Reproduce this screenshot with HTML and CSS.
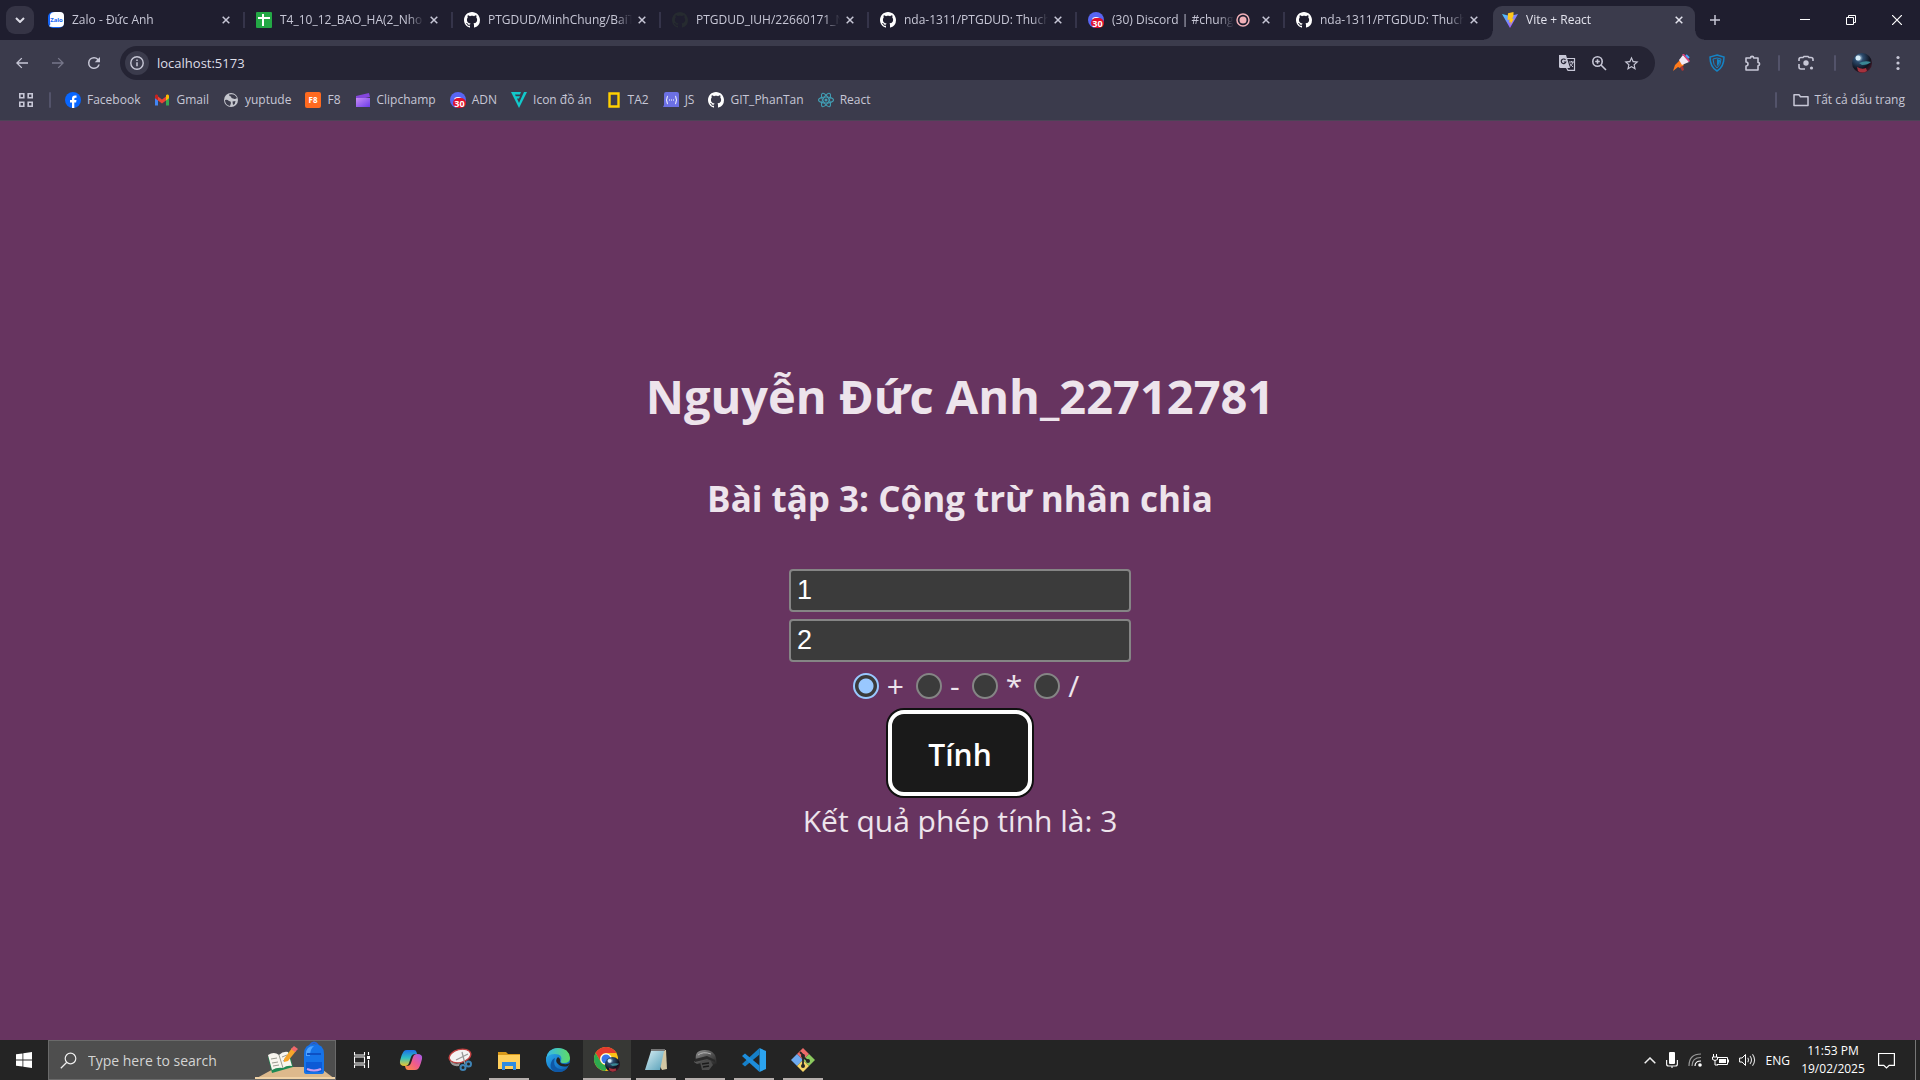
FILE: index.html
```html
<!DOCTYPE html>
<html lang="vi">
<head>
<meta charset="utf-8">
<title>Vite + React</title>
<link rel="stylesheet" href="styles.css">
</head>
<body>
<svg class="defs" aria-hidden="true">
  <defs>
    <linearGradient id="gViteA" x1="0" y1="0" x2="1" y2="1"><stop offset="0" stop-color="#41d1ff"/><stop offset="1" stop-color="#bd34fe"/></linearGradient>
    <linearGradient id="gClip" x1="0" y1="0" x2="1" y2="1"><stop offset="0" stop-color="#c88cf5"/><stop offset="1" stop-color="#6a3be8"/></linearGradient>
    <linearGradient id="gEdge" x1="0" y1="0" x2="1" y2="1"><stop offset="0" stop-color="#2fb6e8"/><stop offset=".5" stop-color="#1b84d6"/><stop offset="1" stop-color="#0c59a4"/></linearGradient>
    <linearGradient id="gEdge2" x1="0" y1="0" x2="1" y2="0"><stop offset="0" stop-color="#35b7f0"/><stop offset="1" stop-color="#5fdc64"/></linearGradient>
    <linearGradient id="gCopA" x1="0" y1="0" x2="0" y2="1"><stop offset="0" stop-color="#1c6fe8"/><stop offset=".5" stop-color="#2fc0c4"/><stop offset="1" stop-color="#f2c62b"/></linearGradient>
    <linearGradient id="gCopB" x1="1" y1="0" x2="0" y2="1"><stop offset="0" stop-color="#a05af0"/><stop offset=".5" stop-color="#f05a8c"/><stop offset="1" stop-color="#fb923c"/></linearGradient>
    <linearGradient id="gNote" x1="0" y1="0" x2="1" y2="1"><stop offset="0" stop-color="#d8eef3"/><stop offset="1" stop-color="#559fb8"/></linearGradient>
    <radialGradient id="gOrb" cx=".35" cy=".25" r=".8"><stop offset="0" stop-color="#cfe8f5"/><stop offset=".25" stop-color="#2d4d70"/><stop offset=".7" stop-color="#10131f"/><stop offset="1" stop-color="#4a1626"/></radialGradient>
    <linearGradient id="gHelm" x1="0" y1="0" x2="1" y2="1"><stop offset="0" stop-color="#999"/><stop offset=".5" stop-color="#555"/><stop offset="1" stop-color="#222"/></linearGradient>
    <symbol id="github" viewBox="0 0 16 16"><path fill="currentColor" d="M8 0C3.58 0 0 3.58 0 8c0 3.54 2.29 6.53 5.47 7.59.4.07.55-.17.55-.38 0-.19-.01-.82-.01-1.49-2.01.37-2.53-.49-2.69-.94-.09-.23-.48-.94-.82-1.13-.28-.15-.68-.52-.01-.53.63-.01 1.08.58 1.23.82.72 1.21 1.87.87 2.33.66.07-.52.28-.87.51-1.07-1.78-.2-3.64-.89-3.64-3.95 0-.87.31-1.59.82-2.15-.08-.2-.36-1.02.08-2.12 0 0 .67-.21 2.2.82.64-.18 1.32-.27 2-.27s1.36.09 2 .27c1.53-1.04 2.2-.82 2.2-.82.44 1.1.16 1.92.08 2.12.51.56.82 1.27.82 2.15 0 3.07-1.87 3.75-3.65 3.95.29.25.54.73.54 1.48 0 1.07-.01 1.93-.01 2.2 0 .21.15.46.55.38A8.01 8.01 0 0 0 16 8c0-4.42-3.58-8-8-8z"/></symbol>
    <symbol id="x" viewBox="0 0 8 8"><path d="M.7.7l6.6 6.6M7.3.7L.7 7.3" fill="none" stroke="currentColor" stroke-width="1.5"/></symbol>
    <symbol id="back" viewBox="0 0 24 24"><path fill="currentColor" d="M21 11H6.83l5.59-5.59L11 4l-8 8 8 8 1.41-1.41L6.83 13H21v-2z"/></symbol>
    <symbol id="discord" viewBox="0 0 16 16"><circle cx="8" cy="8" r="8" fill="#5865f2"/><path d="M4.500 6q3.500-2 7 0v3h-7z" fill="#fff"/><rect x="3" y="6" width="13" height="10" rx="5" fill="#e0102a"/><text x="9.500" y="14.500" text-anchor="middle" font-size="9" font-weight="700" fill="#fff">30</text></symbol>
    <symbol id="orb" viewBox="0 0 20 20"><circle cx="10" cy="10" r="10" fill="url(#gOrb)"/><path d="M7 10q6-3 12-1-3 3-9 3z" fill="#3a8794"/><path d="M5 14q5 3 9 1l1 3q-5 3-9 0z" fill="#a5323d"/><circle cx="6" cy="5" r="2.500" fill="#d7edf8"/></symbol>
  </defs>
</svg>

<div class="window">
  <header class="browser">
    <div class="tabstrip">
      <button class="tab-search" aria-label="Tìm thẻ"><svg width="10" height="6" viewBox="0 0 10 6"><path d="M1 1l4 4 4-4" fill="none" stroke="currentColor" stroke-width="2"/></svg></button>
      <div class="tab">
        <svg class="icon16" viewBox="0 0 16 16"><rect width="16" height="16" rx="5" fill="#1565f5"/><path d="M2 3q1-3 5-3h5q4 0 4 4v7q0 4-4 4H5q-3 0-4-1 2-1 1-4z" fill="#fff"/><text x="8.500" y="10" font-size="6" font-weight="700" text-anchor="middle" fill="#1565f5">Zalo</text></svg>
        <span class="tab-title">Zalo - Đức Anh</span><button class="tab-close" aria-label="Đóng"><svg><use href="#x"/></svg></button>
      </div>
      <div class="tab">
        <svg class="icon16" viewBox="0 0 16 16"><rect width="16" height="16" rx="1" fill="#23a845"/><path d="M7 2v12M2 6h12" stroke="#fff" stroke-width="2"/></svg>
        <span class="tab-title">T4_10_12_BAO_HA(2_Nho</span><button class="tab-close" aria-label="Đóng"><svg><use href="#x"/></svg></button>
      </div>
      <div class="tab">
        <svg class="icon16 white"><use href="#github"/></svg>
        <span class="tab-title">PTGDUD/MinhChung/BaiT</span><button class="tab-close" aria-label="Đóng"><svg><use href="#x"/></svg></button>
      </div>
      <div class="tab">
        <svg class="icon16 dim"><use href="#github"/></svg>
        <span class="tab-title">PTGDUD_IUH/22660171_N</span><button class="tab-close" aria-label="Đóng"><svg><use href="#x"/></svg></button>
      </div>
      <div class="tab">
        <svg class="icon16 white"><use href="#github"/></svg>
        <span class="tab-title">nda-1311/PTGDUD: Thuch</span><button class="tab-close" aria-label="Đóng"><svg><use href="#x"/></svg></button>
      </div>
      <div class="tab">
        <svg class="icon16"><use href="#discord"/></svg>
        <span class="tab-title">(30) Discord | #chung</span>
        <svg class="rec" viewBox="0 0 14 14"><circle cx="7" cy="7" r="6" fill="none" stroke="#f0b0b8" stroke-width="1.500"/><circle cx="7" cy="7" r="3.500" fill="#f0b0b8"/></svg>
        <button class="tab-close" aria-label="Đóng"><svg><use href="#x"/></svg></button>
      </div>
      <div class="tab">
        <svg class="icon16 white"><use href="#github"/></svg>
        <span class="tab-title">nda-1311/PTGDUD: Thuch</span><button class="tab-close" aria-label="Đóng"><svg><use href="#x"/></svg></button>
      </div>
      <div class="tab active">
        <svg class="icon16" viewBox="0 0 16 16"><path d="M0 2l8 14 8-14-8 2z" fill="url(#gViteA)"/><path d="M11.500 0L6 1.200 5.600 8l2-.4-.5 3 1.800-.6-.8 3.500L12 6.500l-2 .4 1.500-3z" fill="#ffc61a"/></svg>
        <span class="tab-title">Vite + React</span><button class="tab-close" aria-label="Đóng"><svg><use href="#x"/></svg></button>
      </div>
      <button class="new-tab" aria-label="Thẻ mới"><svg width="10" height="10" viewBox="0 0 10 10"><path d="M5 0v10M0 5h10" stroke="currentColor" stroke-width="1.500"/></svg></button>
      <div class="win-controls">
        <button aria-label="Thu nhỏ"><svg width="10" height="10" viewBox="0 0 10 10"><path d="M0 4.500h10" stroke="#fff"/></svg></button>
        <button aria-label="Khôi phục"><svg width="10" height="10" viewBox="0 0 10 10"><path d="M.5 2.500h7v7h-7zM2.500 2.500v-2h7v7h-2" fill="none" stroke="#fff"/></svg></button>
        <button aria-label="Đóng cửa sổ"><svg width="10" height="10" viewBox="0 0 10 10"><path d="M0 0l10 10M10 0L0 10" stroke="#fff" stroke-width="1.200"/></svg></button>
      </div>
    </div>

    <div class="toolbar">
      <button class="nav" aria-label="Quay lại"><svg width="16" height="16"><use href="#back"/></svg></button>
      <button class="nav off" aria-label="Tiến"><svg class="flip" width="16" height="16"><use href="#back"/></svg></button>
      <button class="nav" aria-label="Tải lại"><svg width="18" height="18" viewBox="0 0 24 24"><path fill="currentColor" d="M17.65 6.35A7.96 7.96 0 0 0 12 4a8 8 0 1 0 7.730 10h-2.080A6 6 0 1 1 12 6c1.660 0 3.140.690 4.220 1.780L13 11h7V4l-2.350 2.350z"/></svg></button>
      <div class="omnibox">
        <span class="info"><svg width="16" height="16" viewBox="0 0 16 16"><circle cx="8" cy="8" r="6.200" fill="none" stroke="currentColor" stroke-width="1.400"/><path d="M8 7.200v4M8 4.500v1.600" stroke="currentColor" stroke-width="1.500"/></svg></span>
        <input class="url" aria-label="Địa chỉ" value="localhost:5173">
        <button class="omni" aria-label="Dịch"><svg width="18" height="18" viewBox="0 0 18 18"><path d="M1 1h7l4 13H2.500Q1 14 1 12.500z" fill="currentColor"/><path d="M9 4.500h7.500v11.800H10l-1.500-2.500" fill="none" stroke="currentColor" stroke-width="1.200"/><path d="M7.500 6A2.300 2.300 0 1 0 7.800 8H5.800" fill="none" stroke="#252434" stroke-width="1.200"/><path d="M11 8h5M13.500 7v1M15 8q-1 3-3 4.500M12 9.500q1 2 3 3.500" fill="none" stroke="currentColor"/></svg></button>
        <button class="omni" aria-label="Thu phóng"><svg width="16" height="16" viewBox="0 0 16 16"><circle cx="6.500" cy="6.500" r="4.700" fill="none" stroke="currentColor" stroke-width="1.600"/><path d="M10 10l5 5M6.500 4.200v4.600M4.200 6.500h4.600" stroke="currentColor" stroke-width="1.600"/></svg></button>
        <button class="omni" aria-label="Đánh dấu"><svg width="17" height="17" viewBox="0 0 24 24"><path fill="currentColor" d="M22 9.240l-7.190-.620L12 2 9.190 8.630 2 9.240l5.460 4.730L5.820 21 12 17.270 18.180 21l-1.630-7.030L22 9.240zM12 15.400l-3.760 2.270 1-4.280-3.320-2.880 4.380-.380L12 6.100l1.710 4.040 4.380.380-3.320 2.880 1 4.280L12 15.400z"/></svg></button>
      </div>
      <button class="ext" aria-label="Tiện ích loa"><svg width="18" height="18" viewBox="0 0 18 18"><path d="M1 17l2-6 5-5 4 5-4 3-2-1z" fill="#ff7a1a"/><path d="M7 6l4-5 6 7-7 3z" fill="#f3e8f4"/><path d="M10 0l7 8 1-1-6-7z" fill="#e83e7e"/><path d="M8 13l2 4 2-1-1-4z" fill="#a33"/><path d="M14 1l3 3" stroke="#49a4ff" stroke-width="2"/></svg></button>
      <button class="ext" aria-label="Tiện ích khiên"><svg width="16" height="18" viewBox="0 0 16 18"><path d="M8 1l7 2q0 10-7 14Q1 13 1 3z" fill="none" stroke="#1583c4" stroke-width="1.500"/><path d="M8 4l4 1q0 6-4 9-4-3-4-9z" fill="none" stroke="#1583c4"/><path d="M8 5l3 1q0 4-3 6z" fill="#1583c4"/></svg></button>
      <button class="ext puzzle" aria-label="Tiện ích"><svg width="18" height="18" viewBox="0 0 18 18"><path d="M2 4h4.500a1.600 1.600 0 1 1 3.200 0H14v4.500a1.600 1.600 0 1 1 0 3.200V16H2v-4a2 2 0 0 0 0-4z" fill="none" stroke="currentColor" stroke-width="1.600" stroke-linejoin="round"/></svg></button>
      <span class="sep"></span>
      <button class="ext lens" aria-label="Ống kính"><svg width="16" height="16" viewBox="0 0 16 16"><path d="M1 6V4.500Q1 2.500 3 2.500h2l1-1h4l1 1h2q2 0 2 2V6M1 9v3q0 2 2 2h4" fill="none" stroke="currentColor" stroke-width="1.600"/><circle cx="8" cy="8" r="2.700" fill="currentColor"/><circle cx="13.500" cy="13" r="1.600" fill="currentColor"/></svg></button>
      <span class="sep"></span>
      <button class="ext avatar" aria-label="Hồ sơ"><svg width="20" height="20"><use href="#orb"/></svg></button>
      <button class="ext" aria-label="Menu"><svg width="4" height="16" viewBox="0 0 4 16"><g fill="currentColor"><circle cx="2" cy="2.500" r="1.600"/><circle cx="2" cy="8" r="1.600"/><circle cx="2" cy="13.500" r="1.600"/></g></svg></button>
    </div>

    <nav class="bookmarks">
      <button class="apps" aria-label="Nhóm thẻ"><svg width="14" height="14" viewBox="0 0 14 14"><path d="M.8.8h4v4h-4zM9.200.8h4v4h-4zM.8 9.200h4v4h-4zM9.200 9.200h4v4h-4z" fill="none" stroke="currentColor" stroke-width="1.600"/></svg></button>
      <span class="sep"></span>
      <a class="bm" href="#"><svg class="icon16" viewBox="0 0 16 16"><circle cx="8" cy="8" r="8" fill="#0866ff"/><path d="M7 16v-5.500H5V8h2V6.500Q7 3.500 10 3.500h1.500v2.200h-1Q9.300 5.700 9.300 7v1h2.200l-.4 2.500H9.300V16z" fill="#fff"/></svg>Facebook</a>
      <a class="bm" href="#"><svg class="icon16" viewBox="0 0 16 16"><path d="M1 3.500v10h3V7z" fill="#4285f4"/><path d="M15 3.500v10h-3V7z" fill="#34a853"/><path d="M4 4.500l4 3 4-3V8.500l-4 3-4-3z" fill="#ea4335"/><path d="M1 4q0-2 2-1.500l1 .8v5.200L1 6.200z" fill="#c5221f"/><path d="M15 4q0-2-2-1.500l-1 .8v5.200l3-2.300z" fill="#fbbc04"/></svg>Gmail</a>
      <a class="bm" href="#"><svg class="icon16" viewBox="0 0 16 16"><circle cx="8" cy="8" r="7" fill="#c5c6ce"/><path d="M2 8q2-1 4 1 2 0 2 2l-1 3Q2 13 2 8zM6 2.500q0 2 2 2 0 2 2 2 2 1 4-.5Q12 1 6 2.500zM9.500 9.500l3-.5q0 3-2.500 4z" fill="#3c3c4c"/></svg>yuptude</a>
      <a class="bm" href="#"><svg class="icon16" viewBox="0 0 16 16"><rect width="16" height="16" rx="2" fill="#ff6a1f"/><text x="8" y="11" text-anchor="middle" font-size="8" font-weight="700" fill="#fff">F8</text></svg>F8</a>
      <a class="bm" href="#"><svg class="icon16" viewBox="0 0 16 16"><path d="M1 4l13-3 1 4-14 3z" fill="#8547dd"/><path d="M1 6h14v9H1z" fill="url(#gClip)"/></svg>Clipchamp</a>
      <a class="bm" href="#"><svg class="icon16"><use href="#discord"/></svg>ADN</a>
      <a class="bm" href="#"><svg class="icon16" viewBox="0 0 16 16"><path d="M0 0h10L9 2.500H4l.8 1.700H9L8 6.500H6l2 4.500L13 0h3L8 16z" fill="#12c9cb"/></svg>Icon đồ án</a>
      <a class="bm" href="#"><svg class="icon16" viewBox="0 0 16 16"><path d="M3.500 1.500h9v13h-9z" fill="none" stroke="#ffcf00" stroke-width="2.400"/></svg>TA2</a>
      <a class="bm" href="#"><svg class="icon16" viewBox="0 0 16 16"><path d="M1 2q0-2 2-2h11q2 0 2 2v13H0l1-2z" fill="#6c70e4"/><path d="M5 4Q4 4 4 6T3 8q1 0 1 2t1 2M12 4q1 0 1 2t1 2q-1 0-1 2t-1 2M6 8h1M8 8h1M10 8h1" fill="none" stroke="#fff"/></svg>JS</a>
      <a class="bm" href="#"><svg class="icon16 white"><use href="#github"/></svg>GIT_PhanTan</a>
      <a class="bm" href="#"><svg class="icon16" viewBox="0 0 16 16"><g fill="none" stroke="#419cb2" stroke-width="1.100"><ellipse cx="8" cy="8" rx="7.500" ry="3"/><ellipse cx="8" cy="8" rx="7.500" ry="3" transform="rotate(60 8 8)"/><ellipse cx="8" cy="8" rx="7.500" ry="3" transform="rotate(120 8 8)"/></g><circle cx="8" cy="8" r="1.500" fill="#419cb2"/></svg>React</a>
      <div class="all-bookmarks"><span class="sep"></span>
      <a class="bm all" href="#"><svg class="icon16" viewBox="0 0 16 16"><path d="M1 2.700h5l1.500 2H15v8.800H1z" fill="none" stroke="currentColor" stroke-width="1.500" stroke-linejoin="round"/></svg>Tất cả dấu trang</a></div>
    </nav>
  </header>

  <main class="page">
    <h1>Nguyễn Đức Anh_22712781</h1>
    <h2>Bài tập 3: Cộng trừ nhân chia</h2>
    <div class="fields">
      <input type="text" aria-label="Số thứ nhất" value="1">
      <input type="text" aria-label="Số thứ hai" value="2">
    </div>
    <div class="ops">
      <label><input type="radio" name="op" checked>+</label>
      <label><input type="radio" name="op">-</label>
      <label><input type="radio" name="op">*</label>
      <label><input type="radio" name="op">/</label>
    </div>
    <button class="calc">Tính</button>
    <p class="result">Kết quả phép tính là: 3</p>
  </main>

  <footer class="taskbar">
    <button class="start" aria-label="Start"><svg width="16" height="16" viewBox="0 0 16 16"><path d="M0 2.300L6.500 1.400v6.200H0zM7.300 1.300L16 0v7.600H7.300zM0 8.400h6.500v6.200L0 13.700zM7.300 8.400H16V16l-8.700-1.300z" fill="#fff"/></svg></button>
    <label class="search">
      <svg width="17" height="17" viewBox="0 0 17 17"><circle cx="10.500" cy="6.500" r="5.300" fill="none" stroke="#eee" stroke-width="1.200"/><path d="M6.800 10.300L.8 16.200" stroke="#eee" stroke-width="1.300"/></svg>
      <input type="text" placeholder="Type here to search" aria-label="Type here to search">
      <svg class="art" width="80" height="38" viewBox="0 0 80 38"><path d="M0 38l22-12h42l16 12z" fill="#ddb98c"/><path d="M0 36h80v2H0z" fill="#f0d2a6"/><path d="M13 16l4 16 21-6-4-15-10 3z" fill="#1f8a54"/><path d="M13 14q6-4 11 0 4-4 9-3l4 14q-5-1-9 2-6-1-11 2z" fill="#f8f6ef"/><path d="M24 14l4 13M16 18l6-1M17 22l6-1M18 25l6-1M27 16l5-2M28 20l5-2" stroke="#9a9a90"/><path d="M29 18l8-11 4 3-8 10-4 1z" fill="#f6a52a"/><path d="M36 8l3-3 4 3-3 3z" fill="#f0686c"/><path d="M55 4q4-5 8 0" fill="none" stroke="#2563d9" stroke-width="2"/><path d="M49 31V13q0-10 10-10t10 10v18q0 2-3 2H52q-3 0-3-2z" fill="#1673e8"/><path d="M51 13q0-8 8-8-4 3-4 10h-4z" fill="#4fa3ff"/><path d="M52 12h14v2H52z" fill="#0d50c4"/><path d="M51 21h16v9q0 1-2 1H53q-2 0-2-1z" fill="#0d5ad6"/><path d="M52 28q7 3 14 0" stroke="#c79df0" stroke-width="2" fill="none"/></svg>
    </label>
    <div class="apps-row">
      <button class="app" aria-label="Task View"><svg width="16" height="16" viewBox="0 0 16 16"><path d="M.5 0v3h10V0M.5 16v-3h10v3M.5 5h10v6H.5zM14.500 0v3M14.500 8v8" fill="none" stroke="#fff" stroke-width="1.100"/><path d="M13 4h3v3h-3z" fill="#fff"/></svg></button>
      <button class="app" aria-label="Copilot"><svg width="24" height="24" viewBox="0 0 24 24"><path d="M8 2h7q2 0 2.500 2L18 6h-2q-3 0-4 3l-2 6q-1 3-4 3-6 0-5-5 2-8 4-10 1-1 3-1z" fill="url(#gCopA)"/><path d="M16 22H9q-2 0-2.500-2L6 18h2q3 0 4-3l2-6q1-3 4-3 6 0 5 5-2 8-4 10-1 1-3 1z" fill="url(#gCopB)"/></svg></button>
      <button class="app" aria-label="Snipping Tool"><svg width="24" height="24" viewBox="0 0 24 24"><ellipse cx="12" cy="8" rx="11" ry="6.500" transform="rotate(-14 12 8)" fill="#f3f3f3" stroke="#c24242" stroke-width="1.400"/><path d="M2 13q5 4 10 2l-1 3q-8 1-9-5z" fill="#999"/><path d="M14 4l3 12M8 12l12-6" stroke="#999" stroke-width="1.300"/><g fill="none" stroke="#3f83b5" stroke-width="2"><circle cx="15" cy="19.500" r="2.500"/><circle cx="20.500" cy="16" r="2.500"/></g></svg></button>
      <button class="app running" aria-label="File Explorer"><svg width="24" height="24" viewBox="0 0 24 24"><path d="M1 4h8l2 2h12v4H1z" fill="#d9991a"/><path d="M1 7h22v14H1z" fill="#ffcf5c"/><path d="M5 22v-8h14v8h-3v-4H8v4z" fill="#2e8be0"/></svg></button>
      <button class="app" aria-label="Edge"><svg width="24" height="24" viewBox="0 0 24 24"><circle cx="12" cy="12" r="12" fill="url(#gEdge)"/><path d="M0 11Q2 0 12 0q11 0 12 10 0 5-6 5-4 0-3-2 2-7-6-7-7 0-9 5z" fill="url(#gEdge2)"/><path d="M9 10q-3 9 5 11 4 1 8-2-4 6-12 5-7-2-5-9 1-4 4-5z" fill="#0f58a6"/><path d="M12 9q-3 3-1 6 4 5 11 3l3-4q-3 3-7 2-4 0-4-3 1-2-2-4z" fill="#242424"/></svg></button>
      <button class="app running current" aria-label="Chrome"><svg width="26" height="26" viewBox="0 0 26 26"><circle cx="12" cy="12" r="12" fill="#fbc116"/><path d="M1.600 6A12 12 0 0 1 22.400 6H12a6 6 0 0 0-5.200 9z" fill="#e33b2e"/><path d="M1.600 6l5.200 9A6 6 0 0 0 12 18l3 .2L11 24A12 12 0 0 1 1.600 6z" fill="#2da94f"/><circle cx="12" cy="12" r="5.800" fill="#fff"/><circle cx="12" cy="12" r="4.500" fill="#3676e8"/><svg x="11" y="10" width="15" height="15"><use href="#orb"/></svg></svg></button>
      <button class="app running" aria-label="Notepad"><svg width="24" height="24" viewBox="0 0 24 24"><path d="M7 2h15l1 19-5 1z" fill="#d3c7a3"/><path d="M7 3h13l-4 19H1z" fill="url(#gNote)"/><path d="M7 2h14" stroke="#777" stroke-width="2"/></svg></button>
      <button class="app running" aria-label="PUBG"><svg width="24" height="24" viewBox="0 0 24 24"><path d="M3 12Q1 2 12 2q9 0 11 8l1 6-5 1-2-3-9 1-4 1-3-2z" fill="url(#gHelm)"/><path d="M2 11l12-3 8 4v2l-8-3-12 3z" fill="#2a2a2a"/><path d="M7 14l10-2 3 5-4 5H9z" fill="#4b4b4b"/><path d="M9 16l7-1M10 19l6-1" stroke="#1b1b1b" stroke-width="1.500"/><path d="M5 7q5-4 13-1" stroke="#b5b5b5" fill="none"/></svg></button>
      <button class="app running" aria-label="VS Code"><svg width="24" height="24" viewBox="0 0 24 24"><path d="M17.500 0L24 3v18l-6.500 3z" fill="#2ba3ef"/><path d="M17.500 0v6.500L3 18.500 0 16z" fill="#167fc8"/><path d="M17.500 24v-6.500L3 5.500 0 8z" fill="#1d8ddb"/></svg></button>
      <button class="app running" aria-label="Git Bash"><svg width="24" height="24" viewBox="0 0 24 24"><path d="M12 0l6 6-6 6-6-6z" fill="#ec6b68"/><path d="M6 6l6 6-6 6-6-6z" fill="#6eaaf0"/><path d="M18 6l6 6-6 6-6-6z" fill="#8cc95f"/><path d="M12 12l6 6-6 6-6-6z" fill="#f5d367"/><path d="M9 4l3 3v11M12 9l5 4" stroke="#252525" stroke-width="1.800" fill="none"/><circle cx="12" cy="8" r="2" fill="#252525"/><circle cx="12" cy="18" r="2" fill="#252525"/><circle cx="17" cy="13" r="2" fill="#252525"/></svg></button>
    </div>
    <div class="tray">
      <svg width="12" height="7" viewBox="0 0 12 7"><path d="M.7 6.300L6 1l5.300 5.300" fill="none" stroke="#eee" stroke-width="1.500"/></svg>
      <svg width="12" height="16" viewBox="0 0 12 16"><rect x="3" y="0" width="6" height="12" rx="1" fill="#fff"/><path d="M.6 8v4q0 2 2 2h6.800q2 0 2-2V8M6 14v2" fill="none" stroke="#eee" stroke-width="1.200"/></svg>
      <svg width="14" height="14" viewBox="0 0 14 14"><g fill="none" stroke="#999" stroke-width="1.200"><path d="M1 13Q1 1 13 1"/><path d="M4 13q0-8.500 9-8.500"/></g><path d="M7 13q0-5 6-5" fill="none" stroke="#fff" stroke-width="1.200"/><circle cx="12" cy="12" r="1.800" fill="#fff"/></svg>
      <svg width="17" height="12" viewBox="0 0 17 12"><path d="M5 3.500h10.500v7H5" fill="none" stroke="#fff"/><path d="M7 5h7v4H7zM15.500 5.500H17v3h-1.500z" fill="#fff"/><path d="M1.500 0v3M4.500 0v3M.5 3h5v2.500q-2.500 2-5 0zM3 6v5h3" fill="none" stroke="#fff"/></svg>
      <svg width="17" height="14" viewBox="0 0 17 14"><path d="M.6 5h2.500L6.500 1.500v11L3.100 9H.6z" fill="none" stroke="#fff"/><path d="M8.700 4.800q1.600 2.200 0 4.400M11 3q3 4 0 8M13.500 1.200q4.200 5.800 0 11.600" fill="none" stroke="#ddd" stroke-width="1.100"/></svg>
      <span class="lang">ENG</span>
      <time class="clock"><span>11:53 PM</span><span>19/02/2025</span></time>
      <button class="notif" aria-label="Thông báo"><svg width="17" height="17" viewBox="0 0 17 17"><path d="M.6 1.500h15.800v11.800h-5.200L8.500 16l-2.700-2.700H.6z" fill="none" stroke="#fff" stroke-width="1.200"/></svg></button>
    </div>
  </footer>
</div>
</body>
</html>
```

FILE: styles.css
```css
* { box-sizing: border-box; }

body {
  margin: 0;
  font-family: "Open Sans", "Noto Sans", sans-serif;
  font-size: 12px;
}

button {
  display: flex;
  align-items: center;
  justify-content: center;
  flex-shrink: 0;
  margin: 0;
  padding: 0;
  border: 0;
  background: none;
  color: inherit;
  font: inherit;
}

svg { flex-shrink: 0; }
.defs { position: absolute; width: 0; height: 0; }
.icon16 { width: 16px; height: 16px; }
.white { color: #fff; }
.dim { color: #262b30; }
.flip { transform: scaleX(-1); }

.window {
  display: flex;
  flex-direction: column;
  min-height: 100vh;
}

/* Browser chrome */
.browser {
  background: #3b3b4c;
  border-bottom: 1px solid #4c4356;
  color: #c7c7d6;
}

.tabstrip {
  display: flex;
  align-items: center;
  height: 40px;
  background: #1f1e2f;
}

.tab-search {
  width: 28px;
  height: 28px;
  margin: 0 3px 0 6px;
  border-radius: 9px;
  background: #353445;
  color: #dcdce6;
}

.tab {
  display: flex;
  align-items: center;
  flex: 0 1 208px;
  min-width: 0;
  height: 16px;
  padding: 0 9px 0 11px;
  border-right: 2px solid #35344a;
}
.tab:has(+ .active) { border-right-color: transparent; }

.tab.active {
  position: relative;
  flex-basis: 202px;
  align-self: flex-end;
  height: 34px;
  padding: 0 8px 6px 9px;
  border: 0;
  border-radius: 9px 9px 0 0;
  background: #3b3b4c;
  color: #e4e4ee;
}
.tab.active::before,
.tab.active::after {
  content: "";
  position: absolute;
  bottom: 0;
  width: 9px;
  height: 9px;
}
.tab.active::before { left: -9px; background: radial-gradient(circle at 0 0, #1f1e2f 8px, #3b3b4c 9px); }
.tab.active::after { right: -9px; background: radial-gradient(circle at 100% 0, #1f1e2f 8px, #3b3b4c 9px); }

.tab-title {
  flex: 1;
  min-width: 0;
  margin-left: 8px;
  overflow: hidden;
  line-height: 20px;
  white-space: nowrap;
  mask-image: linear-gradient(to right, #000 calc(100% - 16px), transparent);
}

.tab-close {
  width: 16px;
  height: 16px;
  margin-left: 2px;
}
.tab-close svg { width: 8px; height: 8px; }
.rec { width: 14px; height: 14px; margin: 0 6px 0 2px; }
.new-tab { width: 28px; height: 28px; margin-left: 6px; }

.win-controls { display: flex; margin-left: auto; }
.win-controls button { width: 46px; height: 40px; }

.toolbar {
  display: flex;
  align-items: center;
  height: 46px;
  padding: 0 4px;
}

.nav { width: 36px; height: 34px; }
.nav.off { color: #77778a; }

.omnibox {
  display: flex;
  align-items: center;
  flex: 1;
  height: 34px;
  margin: 0 8px;
  padding: 0 8px 0 5px;
  border-radius: 17px;
  background: #252434;
}

.info {
  display: flex;
  align-items: center;
  justify-content: center;
  width: 24px;
  height: 24px;
  border-radius: 50%;
  background: #3b3b4c;
}

.url {
  flex: 1;
  min-width: 0;
  margin: 0 8px;
  padding: 0;
  border: 0;
  background: none;
  color: #dedee8;
  font: inherit;
  font-size: 13px;
  line-height: 20px;
}

.omni { width: 32px; height: 32px; }
.ext { width: 36px; height: 34px; }
.puzzle { margin-right: 7px; }
.lens { margin: 0 10px 0 8px; }
.avatar { margin-left: 8px; }

.sep {
  width: 2px;
  height: 16px;
  flex-shrink: 0;
  border-radius: 1px;
  background: #53536a;
}

.bookmarks {
  display: flex;
  align-items: center;
  gap: 14px;
  height: 34px;
  padding: 0 15px 6px 19px;
}
.apps { margin-right: 2px; }

.bm {
  display: flex;
  align-items: center;
  gap: 6px;
  color: inherit;
  line-height: 20px;
  text-decoration: none;
  white-space: nowrap;
}
.bm.all { gap: 6px; }
.all-bookmarks { display: flex; align-items: center; gap: 16px; margin-left: auto; }

/* Calculator page */
.page {
  display: flex;
  flex: 1;
  flex-direction: column;
  align-items: center;
  justify-content: center;
  padding-top: 48px;
  background: #673460;
  color: #ede4ec;
  font-size: 30px;
}

h1, h2, p { margin: 0; }
h1 { margin-bottom: 51px; font-size: 47px; line-height: 56px; }
h2 { margin-bottom: 46px; font-size: 35px; line-height: 48px; }

.fields { display: flex; flex-direction: column; gap: 7px; }
.fields input {
  width: 342px;
  height: 43px;
  padding: 0 6px;
  border: 2px solid #858585;
  border-radius: 4px;
  background: #3b3b3b;
  color: #fff;
  font-family: "Liberation Sans", Arial, sans-serif;
  font-size: 27px;
}

.ops {
  display: flex;
  gap: 12px;
  height: 48px;
  padding-left: 12px;
  line-height: 48px;
}
.ops label { display: flex; align-items: center; gap: 8px; }
.ops input {
  appearance: none;
  width: 26px;
  height: 26px;
  margin: 0;
  border: 2px solid #858585;
  border-radius: 50%;
  background: #3b3b3b;
}
.ops input:checked {
  border-color: #99c8ff;
  background: radial-gradient(circle, #99c8ff 7px, #3b3b3b 8px);
}

.calc {
  width: 144px;
  height: 86px;
  padding-top: 4px;
  border: 4px solid #fff;
  border-radius: 16px;
  background: #1a1a1a;
  box-shadow: 0 0 0 2px #101010;
  color: #fff;
  font-weight: 600;
}

.result { margin-top: 4px; line-height: 42px; }

/* Windows taskbar */
.taskbar {
  display: flex;
  height: 40px;
  background: #242424;
  color: #fff;
}

.start { width: 48px; }

.search {
  display: flex;
  align-items: center;
  width: 288px;
  padding-left: 11px;
  border: 1px solid #6a6a6a;
  background: #4e4e4e;
}
.search input {
  flex: 1;
  min-width: 0;
  margin-left: 11px;
  padding: 0;
  border: 0;
  background: none;
  font: inherit;
  font-size: 14px;
}
.search input::placeholder { color: #d4d4d4; }

.apps-row { display: flex; gap: 1px; padding-left: 2px; }
.app { position: relative; width: 48px; height: 40px; }
.app.current { background: #373835; }
.running::after {
  content: "";
  position: absolute;
  right: 4px;
  bottom: 0;
  left: 4px;
  height: 2px;
  background: #b5aeac;
}
.current::after { right: 0; left: 0; }

.tray {
  display: flex;
  align-items: center;
  gap: 10px;
  margin-left: auto;
  padding-right: 4px;
}
.lang { font-size: 12px; }
.clock {
  display: flex;
  flex-direction: column;
  align-items: center;
  width: 66px;
  line-height: 18px;
}
.notif {
  width: 40px;
  height: 40px;
  padding-right: 18px;
  border-right: 1px solid #777;
}
```
